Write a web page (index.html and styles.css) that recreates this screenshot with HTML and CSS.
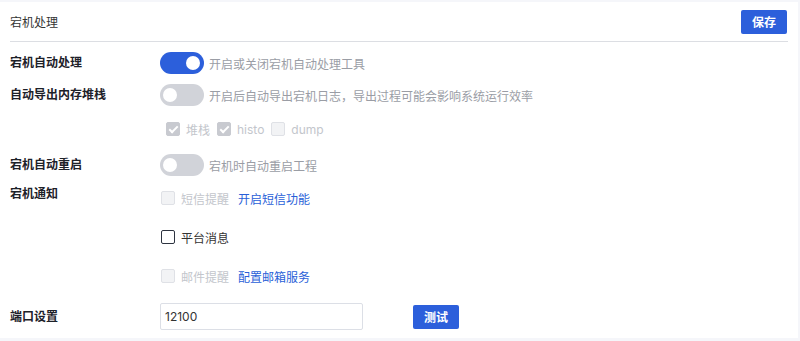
FILE: index.html
```html
<!DOCTYPE html>
<html lang="zh">
<head>
  <meta charset="UTF-8" />
  <title>宕机处理</title>
  <link rel="stylesheet" href="styles.css">
</head>
<body>
  <div class="card">
    <div class="card-header">
      <span class="card-title">宕机处理</span>
      <button class="btn">保存</button>
    </div>

    <div class="row row-first">
      <div class="label">宕机自动处理</div>
      <span class="switch on"></span>
      <span class="desc">开启或关闭宕机自动处理工具</span>
    </div>

    <div class="row row-dump">
      <div class="label">自动导出内存堆栈</div>
      <span class="switch"></span>
      <span class="desc">开启后自动导出宕机日志，导出过程可能会影响系统运行效率</span>
    </div>

    <div class="row row-checks">
      <div class="label"></div>
      <div class="checks">
        <label class="check disabled"><span class="box checked"></span>堆栈</label>
        <label class="check disabled"><span class="box checked"></span>histo</label>
        <label class="check disabled"><span class="box"></span>dump</label>
      </div>
    </div>

    <div class="row row-restart">
      <div class="label">宕机自动重启</div>
      <span class="switch"></span>
      <span class="desc">宕机时自动重启工程</span>
    </div>

    <div class="row row-notify">
      <div class="label">宕机通知</div>
      <div class="notify-list">
        <div class="notify-item">
          <label class="check disabled"><span class="box"></span>短信提醒</label>
          <a class="link" href="#">开启短信功能</a>
        </div>
        <div class="notify-item">
          <label class="check"><span class="box"></span>平台消息</label>
        </div>
        <div class="notify-item">
          <label class="check disabled"><span class="box"></span>邮件提醒</label>
          <a class="link" href="#">配置邮箱服务</a>
        </div>
      </div>
    </div>

    <div class="row row-port">
      <div class="label">端口设置</div>
      <input class="input" type="text" value="12100" />
      <button class="btn btn-test">测试</button>
    </div>
  </div>
</body>
</html>
```

FILE: styles.css
```css
body {
  margin: 0;
  background: #f5f6fa;
  font-family: "Inter", "Noto Sans CJK SC", sans-serif;
  font-size: 12px;
  color: #333;
}
.card {
  width: 778px;
  height: 336px;
  margin: 2px 0 0 0;
  padding: 0 10px;
  background: #fff;
}
.card-header {
  display: flex;
  align-items: center;
  justify-content: space-between;
  height: 39px;
  border-bottom: 1px solid #dcdee3;
}
.card-title {
  color: #333;
}
.btn {
  width: 46px;
  height: 24px;
  border: none;
  border-radius: 2px;
  background: #2c5fdb;
  color: #fff;
  font-family: inherit;
  font-size: 12px;
  font-weight: bold;
  padding: 0;
  margin-right: 1px;
}
.row {
  display: flex;
  align-items: center;
  min-height: 22px;
}
.row-first { margin-top: 10px; }
.row-dump { margin-top: 10px; }
.row-checks { margin-top: 12px; }
.row-restart { margin-top: 14px; }
.row-notify { margin-top: 9px; align-items: flex-start; }
.row-port { margin-top: 16px; }
.label {
  width: 150px;
  flex-shrink: 0;
  font-weight: bold;
  color: #1d2129;
  line-height: 16px;
}
.row-notify .label {
  margin-top: 1px;
}
.switch {
  position: relative;
  width: 44px;
  height: 22px;
  border-radius: 11px;
  background: #d1d3d9;
  flex-shrink: 0;
}
.switch::after {
  content: "";
  position: absolute;
  top: 4px;
  left: 3px;
  width: 14px;
  height: 14px;
  border-radius: 50%;
  background: #fff;
}
.switch.on {
  background: #2c5fdb;
}
.switch.on::after {
  left: auto;
  right: 4px;
}
.desc {
  margin-left: 5px;
  color: #9a9da5;
}
.checks {
  display: flex;
  gap: 7px;
  padding-left: 6px;
}
.check {
  display: flex;
  align-items: center;
  gap: 6px;
  color: #333;
}
.check.disabled {
  color: #c3c6cc;
}
.box {
  width: 12px;
  height: 12px;
  border: 1px solid #2d3340;
  border-radius: 2px;
  background: #fff;
  position: relative;
}
.check.disabled .box {
  border-color: #dfe1e6;
  background: #f2f3f5;
}
.check.disabled .box.checked {
  border-color: #c8cad0;
  background: #c8cad0;
}
.box.checked::after {
  content: "";
  position: absolute;
  left: 4px;
  top: 1px;
  width: 3px;
  height: 7px;
  border: solid #fff;
  border-width: 0 2px 2px 0;
  transform: rotate(45deg);
}
.notify-list {
  display: flex;
  flex-direction: column;
  gap: 17px;
  padding-top: 2px;
  padding-left: 1px;
}
.notify-item {
  display: flex;
  align-items: center;
  gap: 9px;
  height: 22px;
}
.link {
  color: #2a5fd8;
  text-decoration: none;
}
.input {
  width: 197px;
  height: 25px;
  padding: 0 0 0 4px;
  border: 1px solid #dcdfe6;
  border-radius: 2px;
  font-family: inherit;
  font-size: 12px;
  color: #333;
  outline: none;
  margin: 0;
}
.btn-test {
  margin-left: 50px;
}
```
